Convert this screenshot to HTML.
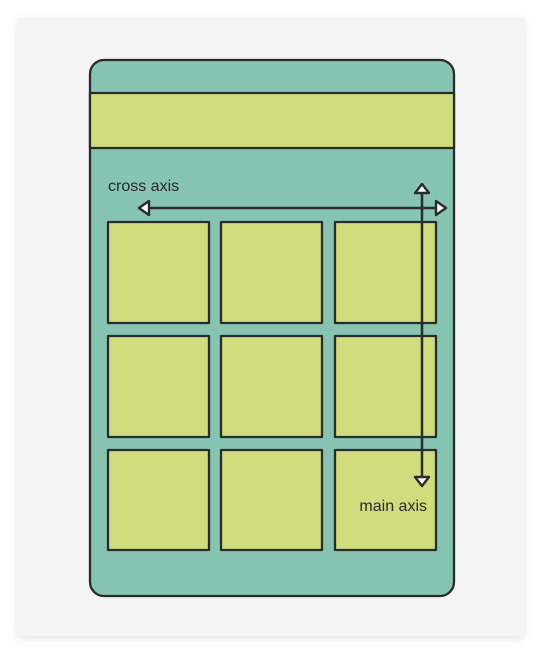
<!DOCTYPE html>
<html><head><style>
html,body{margin:0;padding:0;background:#fff;width:542px;height:654px;overflow:hidden}
.card{position:absolute;left:18px;top:18px;width:506px;height:618px;background:#f4f4f4;box-shadow:0 2px 8px rgba(0,0,0,0.12)}
svg{position:absolute;left:0;top:0}
text{font-family:"Liberation Sans",sans-serif;font-size:16px;fill:#2a2a2a}
</style></head><body>
<div class="card"></div>
<svg width="542" height="654" viewBox="0 0 542 654">
<g stroke="#2b2b2b" stroke-width="2.3" stroke-linejoin="round">
<rect x="90" y="60" width="364" height="536" rx="14" fill="#87c5b3"/>
<rect x="90" y="93" width="364" height="55" fill="#cfdd7c"/>
<g fill="#cfdd7c">
<rect x="108" y="222" width="101" height="101"/><rect x="221" y="222" width="101" height="101"/><rect x="335" y="222" width="101" height="101"/>
<rect x="108" y="336" width="101" height="101"/><rect x="221" y="336" width="101" height="101"/><rect x="335" y="336" width="101" height="101"/>
<rect x="108" y="450" width="101" height="100"/><rect x="221" y="450" width="101" height="100"/><rect x="335" y="450" width="101" height="100"/>
</g>
<line x1="148" y1="208" x2="436" y2="208" stroke-width="2.5"/>
<line x1="422" y1="192" x2="422" y2="476" stroke-width="2.5"/>
<g fill="#fff" stroke-width="2.4">
<path d="M139 208 L149 201 L149 215 Z"/>
<path d="M446 208 L436 201 L436 215 Z"/>
<path d="M422 184 L415 193 L429 193 Z"/>
<path d="M422 486 L415 477 L429 477 Z"/>
</g>
</g>
<text x="108" y="191">cross axis</text>
<text x="427" y="511" text-anchor="end">main axis</text>
</svg>
</body></html>
